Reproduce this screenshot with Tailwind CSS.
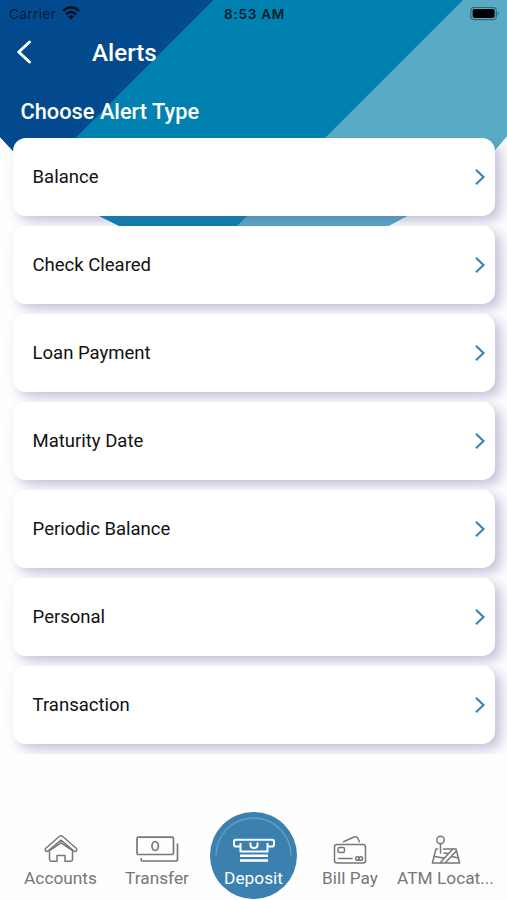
<!DOCTYPE html>
<html lang="en">
<head>
<meta charset="utf-8">
<title>Alerts</title>
<script src="https://cdn.jsdelivr.net/npm/@tailwindcss/browser@4"></script>
</head>
<body class="bg-white">
<div class="relative w-[507px] h-[900px] overflow-hidden bg-[#fefefe] font-['Roboto',sans-serif] flex flex-col">
  <svg class="absolute left-0 top-0" width="507" height="240" viewBox="0 0 507 240">
    <defs><clipPath id="hd"><path d="M0 0H507V136L494 151Q465 188 407 216L388 226Q254 280 119 226L99 216Q45 186 13 151L0 137Z"/></clipPath></defs>
    <g clip-path="url(#hd)">
      <rect width="507" height="240" fill="#0081b0"/>
      <path d="M0 0H213.500L-26.500 240H0Z" fill="#024a8d"/>
      <path d="M463 0H507V240H223Z" fill="#59abc5"/>
    </g>
  </svg>

  <header class="relative h-[137.500px] shrink-0 flex flex-col">
    <div class="h-7 grid grid-cols-3 items-center pl-[9px] pr-[7px] font-['Inter',sans-serif] text-[13.500px] text-black/80">
      <div class="flex items-center gap-[6px]">
        <span class="text-[13.500px] tracking-[0.4px] text-black/65">Carrier</span>
        <svg class="relative -top-px" width="18" height="14" viewBox="0 0 18 14" fill="none" stroke="#00101f" stroke-width="2.500"><path d="M1 4.900Q9-2.300 17 4.900"/><path d="M4 8.200Q9 3.700 14 8.200"/><path d="M6.100 10.400Q9 7.900 11.900 10.400L9 13.600Z" fill="#00101f" stroke="none"/></svg>
      </div>
      <span class="text-center font-semibold tracking-[0.750px] whitespace-nowrap">8:53 AM</span>
      <svg class="justify-self-end" width="30" height="14" viewBox="0 0 30 14"><rect x=".8" y=".3" width="25.500" height="12.400" rx="3.500" fill="none" stroke="#000" stroke-opacity=".4" stroke-width="1.200"/><rect x="2.600" y="2.100" width="22" height="8.800" rx="1.800"/><path d="M27.700 4.200Q30 6.500 27.700 8.800Z" fill-opacity=".45"/></svg>
    </div>
    <div class="h-[50px] flex items-center pl-4 text-white">
      <svg width="18" height="26" viewBox="0 0 18 26" fill="none" stroke="#fff" stroke-width="3" stroke-linecap="round" stroke-linejoin="round"><path d="M13.500 2L2.800 12L13.500 22"/></svg>
      <h1 class="ml-[58px] text-[24.200px] font-medium leading-7">Alerts</h1>
    </div>
    <h2 class="mt-[19.500px] pl-[20.500px] text-[21.800px] leading-7 font-medium text-white">Choose Alert Type</h2>
  </header>

  <main class="relative h-[662px] flex flex-col shrink-0" id="list"></main>

  <nav class="relative flex-1 flex items-end text-[17.300px] leading-5 text-[#777] pl-3">
    <div class="w-[97px] shrink-0 h-[66px] flex flex-col items-center">
      <svg width="34" height="28" viewBox="0 0 34 28" fill="none" stroke="#777" stroke-width="1.500" stroke-linejoin="round"><path d="M1.500 14.500L15.600 2.200Q17 1.200 18.400 2.200L32.500 14.500Q33.500 17.500 30.500 17.500L17 6.200L3.500 17.500Q.5 17.500 1.500 14.500Z"/><path d="M5.500 16.500V25.500Q5.500 27.200 7.200 27.200H13V21.500H21V27.200H26.800Q28.500 27.200 28.500 25.500V16.500L17 8.900Z"/></svg>
      <span class="mt-[6px]">Accounts</span>
    </div>
    <div class="w-[96px] shrink-0 h-[66px] flex flex-col items-center">
      <svg width="44" height="28" viewBox="0 0 44 28" fill="none" stroke="#777" stroke-width="1.700"><rect x="2" y="3.200" width="36.500" height="17.300" rx="1.500"/><ellipse cx="20.200" cy="12" rx="3.200" ry="4.500"/><path d="M42.500 9.500V25.200Q42.500 27 40.700 27H7.500Q6.200 27 6.200 25.700V24"/></svg>
      <span class="mt-[6px]">Transfer</span>
    </div>
    <div class="w-[97px] shrink-0 h-[88px] flex flex-col items-center">
      <div class="relative w-[87px] h-[87px] rounded-full bg-[#3b80af] text-white flex flex-col items-center pt-[24px]">
        <svg class="absolute left-0 top-0" width="87" height="87" viewBox="0 0 87 87" fill="none" stroke="#669fc6" stroke-width="1.300"><path d="M6 43.500A37.500 37.500 0 0 1 81 43.500"/></svg>
        <svg width="44" height="28" viewBox="0 0 44 28" fill="none" stroke="#fff" stroke-width="2"><path d="M8 10.500H4Q2 10.500 2 8.700V5.500Q2 3.800 4 3.800H40Q42 3.800 42 5.500V8.700Q42 10.500 40 10.500H36"/><path d="M8.500 7V15.500H35.500V7"/><path d="M18.500 6.500V9.200Q18.500 12 22 12T25.500 9.200V6.500"/><path d="M8 19.800H36M8 24.500H36" stroke-width="2.500"/></svg>
        <span class="mt-[4px]">Deposit</span>
      </div>
    </div>
    <div class="w-[96px] shrink-0 h-[66px] flex flex-col items-center">
      <svg width="34" height="30" viewBox="0 0 34 30" fill="none" stroke="#777" stroke-width="1.500" stroke-linecap="round" stroke-linejoin="round"><rect x="1.500" y="10.500" width="31" height="18.500" rx="2.500"/><rect x="5" y="13.500" width="6.500" height="5" rx="1.500"/><path d="M5.500 24.500H19"/><circle cx="24.500" cy="24.500" r="1.800"/><circle cx="27.800" cy="24.500" r="1.800"/><path d="M10.500 7.800L20.500 3.200Q23.800 1.800 25 4.500L26.300 7.800"/></svg>
      <span class="mt-[4px]">Bill Pay</span>
    </div>
    <div class="w-[97px] shrink-0 h-[66px] flex flex-col items-center whitespace-nowrap">
      <svg class="relative -left-px" width="30" height="30" viewBox="0 0 30 30" fill="none" stroke="#777" stroke-width="1.500" stroke-linecap="round" stroke-linejoin="round"><circle cx="9.500" cy="6" r="3.700"/><path d="M9.500 10V19M6.500 15H5L1.300 29H28.700L25 15H12.500"/><path d="M9.500 28.500L21.500 15.300M14.500 28.500L25.300 17M3.500 22.500L12.500 24M20.500 22.500L27.300 24M13 19L17 19.500"/></svg>
      <span class="relative -left-px mt-[4px]">ATM Locat...</span>
    </div>
  </nav>
</div>
<script>
  const types = ["Balance", "Check Cleared", "Loan Payment", "Maturity Date", "Periodic Balance", "Personal", "Transaction"];
  document.getElementById("list").innerHTML = types.map((name, i) => `
    <div class="h-[88px] shrink-0 overflow-hidden pl-[13.400px] pr-[12.500px] ${i ? "bg-[#fefefe]" : ""}">
      <div class="h-[78px] rounded-[13px] bg-white shadow-[6px_5px_13px_#60639f66] flex items-center justify-between pl-[19.200px] pr-[9px] text-[18.500px] text-[#111]">
        <span class="pt-[3px]">${name}</span>
        <svg width="12" height="18" viewBox="0 0 12 18" fill="none" stroke="#3b82b1" stroke-width="2.100"><path d="M2 1.800L9.500 9L2 16.200"/></svg>
      </div>
    </div>`).join("");
</script>
</body>
</html>
